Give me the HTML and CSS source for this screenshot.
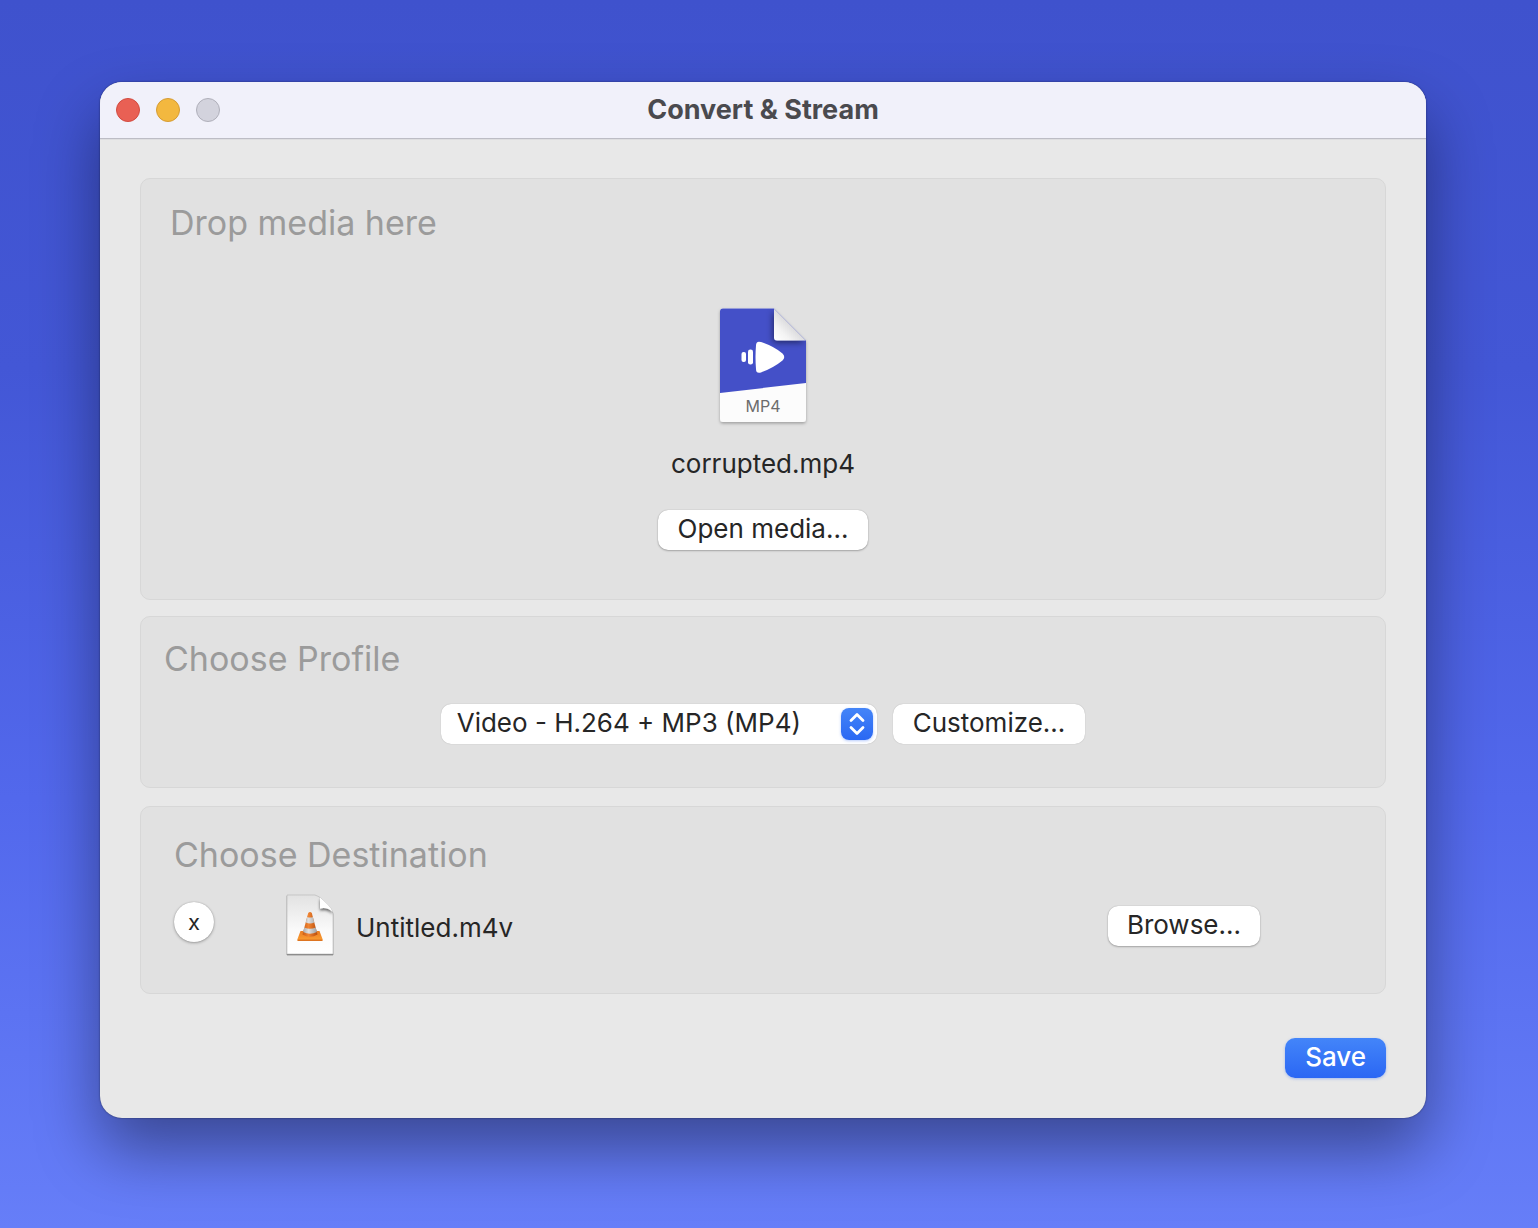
FILE: index.html
```html
<!DOCTYPE html>
<html lang="en">
<head>
<meta charset="utf-8">
<title>Convert &amp; Stream</title>
<link rel="stylesheet" href="styles.css">
</head>
<body>
<main class="window">
  <header class="titlebar">
    <div class="lights">
      <button class="light close" type="button" aria-label="Close"></button>
      <button class="light minimize" type="button" aria-label="Minimize"></button>
      <button class="light zoom" type="button" aria-label="Zoom" disabled></button>
    </div>
    <h1 class="title">Convert &amp; Stream</h1>
  </header>
  <form class="content">
    <section class="panel media">
      <h2 class="heading">Drop media here</h2>
      <div class="drop">
        <svg class="file-icon" width="102" height="126" viewBox="0 0 102 126" aria-hidden="true">
          <defs>
            <linearGradient id="fold" x1="0" y1="1" x2="1" y2="0">
              <stop offset="0" stop-color="#fff"/>
              <stop offset=".25" stop-color="#f4f4f4"/>
              <stop offset=".5" stop-color="#dcdcde"/>
            </linearGradient>
            <filter id="soft" x="-20%" y="-20%" width="140%" height="140%">
              <feDropShadow dx="0" dy="1.5" stdDeviation="1.5" flood-opacity=".3"/>
            </filter>
            <filter id="foldshade" x="-40%" y="-40%" width="180%" height="180%">
              <feDropShadow dx="-1" dy="2" stdDeviation="3" flood-opacity=".5"/>
            </filter>
            <clipPath id="page"><path d="M11 4.500H62L94 36.500V115a3 3 0 0 1-3 3H11a3 3 0 0 1-3-3V7.500a3 3 0 0 1 3-3z"/></clipPath>
          </defs>
          <path filter="url(#soft)" fill="#fcfcfc" d="M11 4.500H62L94 36.500V115a3 3 0 0 1-3 3H11a3 3 0 0 1-3-3V7.500a3 3 0 0 1 3-3z"/>
          <g clip-path="url(#page)">
            <path fill="#4450c8" d="M8 4H94V79L8 89z"/>
            <path filter="url(#foldshade)" fill="url(#fold)" d="M62 4.500L94 36.500H65a3 3 0 0 1-3-3z"/>
          </g>
          <rect x="29.500" y="48" width="4.500" height="10" rx="2" fill="#fff"/>
          <rect x="36" y="45.500" width="5" height="15" rx="2.300" fill="#fff"/>
          <path fill="#fff" d="M44 41.500q0-5 5-3.500q13 4.500 21.500 11.500q3.500 3.500 0 7q-8.500 7-21.500 12q-5 1.500-5-3.500q-1-12 0-23.500z"/>
          <text class="file-type" x="51" y="107.500" text-anchor="middle">MP4</text>
        </svg>
        <p class="filename">corrupted.mp4</p>
        <button class="button" type="button">Open media...</button>
      </div>
    </section>
    <section class="panel profile">
      <h2 class="heading"><label for="profile">Choose Profile</label></h2>
      <div class="profile-row">
        <div class="picker">
          <select id="profile" class="select">
            <option>Video - H.264 + MP3 (MP4)</option>
          </select>
          <svg class="stepper" width="32" height="32" viewBox="0 0 32 32" aria-hidden="true">
            <path d="M10 12.500L16 6.500L22 12.500M10 19.500L16 25.500L22 19.500" fill="none" stroke="#fff" stroke-width="2.800" stroke-linecap="round" stroke-linejoin="round"/>
          </svg>
        </div>
        <button class="button customize" type="button">Customize...</button>
      </div>
    </section>
    <section class="panel destination">
      <h2 class="heading">Choose Destination</h2>
      <div class="destination-row">
        <button class="clear" type="button" aria-label="Remove destination">x</button>
        <svg class="doc-icon" width="50" height="64" viewBox="0 0 50 64" aria-hidden="true">
          <defs>
            <linearGradient id="paper" x1="0" y1="0" x2="0" y2="1">
              <stop offset="0" stop-color="#e2e2e2"/>
              <stop offset=".6" stop-color="#fafafa"/>
              <stop offset="1" stop-color="#fff"/>
            </linearGradient>
            <linearGradient id="orange" x1="0" y1="0" x2="1" y2="0">
              <stop offset="0" stop-color="#c95c14"/>
              <stop offset=".4" stop-color="#f08432"/>
              <stop offset="1" stop-color="#b84d0c"/>
            </linearGradient>
            <linearGradient id="stripe" x1="0" y1="0" x2="1" y2="0">
              <stop offset="0" stop-color="#aaa"/>
              <stop offset=".4" stop-color="#e0e0e0"/>
              <stop offset="1" stop-color="#a0a0a0"/>
            </linearGradient>
            <linearGradient id="base" x1="0" y1="0" x2="0" y2="1">
              <stop offset="0" stop-color="#ea7c22"/>
              <stop offset="1" stop-color="#fba033"/>
            </linearGradient>
            <filter id="docshade" x="-20%" y="-20%" width="140%" height="140%">
              <feDropShadow dx="0" dy="1" stdDeviation=".7" flood-opacity=".6"/>
            </filter>
            <filter id="curlshade" x="-50%" y="-50%" width="200%" height="200%">
              <feDropShadow dx="0" dy="2" stdDeviation="1.600" flood-opacity=".6"/>
            </filter>
            <clipPath id="docclip"><path d="M2 2H30Q34 3 38 7L43 12Q47 16 48 20V61H2z"/></clipPath>
          </defs>
          <path filter="url(#docshade)" fill="url(#paper)" stroke="#aaa" stroke-width=".5" d="M2 2H30Q34 3 38 7L43 12Q47 16 48 20V61H2z"/>
          <g clip-path="url(#docclip)">
            <path filter="url(#curlshade)" fill="#fff" d="M35 4V15.500Q42 13.500 48 19L46 14z"/>
          </g>
          <path fill="url(#base)" d="M15.500 38H34.500L37.500 46Q38 48 36.500 48H13.500Q12 48 12.500 46z"/>
          <path fill="#dd7420" d="M12.500 46.500H37.500Q38 48 36.500 48H13.500Q12 48 12.500 46.500z"/>
          <path fill="url(#orange)" d="M23.200 20Q25 18 26.800 20L32.500 41.500Q25 46 17.500 41.500z"/>
          <path fill="url(#stripe)" d="M22.100 24Q25 25 27.900 24L29.300 29.500Q25 31.500 20.700 29.500zM19.300 34.500Q25 37 30.700 34.500L31.900 39Q25 42.500 18.100 39z"/>
        </svg>
        <p class="filename">Untitled.m4v</p>
        <button class="button browse" type="button">Browse...</button>
      </div>
    </section>
    <div class="actions">
      <button class="button primary" type="submit">Save</button>
    </div>
  </form>
</main>
</body>
</html>
```
FILE: styles.css
```css
* {
  box-sizing: border-box;
}

body {
  margin: 0;
  min-height: 100vh;
  padding: 82px 112px 110px 100px;
  background: linear-gradient(#3f52cd, #4357d6 30%, #5268ec 65%, #667ef8);
  color: #262626;
  font-family: Inter, "Liberation Sans", sans-serif;
  font-size: 26px;
  line-height: 32px;
}

h1,
h2,
p {
  margin: 0;
}

button,
select {
  font: inherit;
  color: inherit;
  border: 0;
}

.window {
  border-radius: 22px;
  background: #e8e8e8;
  box-shadow: 0 0 2px rgba(0, 0, 0, .5), 0 32px 64px rgba(0, 0, 0, .4);
}

.titlebar {
  display: grid;
  grid-template-columns: 1fr auto 1fr;
  align-items: center;
  height: 56px;
  padding: 0 16px;
  border-radius: 22px 22px 0 0;
  background: #f1f1fa;
  box-shadow: 0 1px 0 #bdbdc5, 0 2px 0 #dedee0;
}

.lights {
  display: flex;
  gap: 16px;
}

.light {
  width: 24px;
  height: 24px;
  padding: 0;
  border: 1px solid;
  border-radius: 50%;
}

.close {
  background: #e96054;
  border-color: #d24b40;
}

.minimize {
  background: #f3b83f;
  border-color: #d69c34;
}

.zoom {
  background: #d3d3dd;
  border-color: #b0b0ba;
}

.title {
  color: #4a4a4e;
  font-size: 27px;
  line-height: 32px;
  font-weight: 700;
}

.content {
  padding: 40px;
}

.panel {
  border: 1px solid #d7d7d7;
  border-radius: 10px;
  background: #e1e1e1;
}

.heading {
  color: #9b9b9b;
  font-size: 34px;
  line-height: 44px;
  font-weight: 400;
}

.media {
  min-height: 422px;
  padding: 22px 29px;
}

.drop {
  display: flex;
  flex-direction: column;
  align-items: center;
  padding-top: 59px;
}

.drop .filename {
  margin: 18px 0 30px;
}

.file-icon {
  display: block;
}

.file-type {
  font-size: 16px;
  fill: #6c6c6c;
}

.button {
  height: 40px;
  padding: 0 20px 2px;
  border-radius: 10px;
  background: #fff;
  box-shadow: 0 0 1px rgba(0, 0, 0, .3), 0 1px 2px rgba(0, 0, 0, .25);
}

.profile {
  min-height: 172px;
  margin-top: 16px;
  padding: 20px 23px;
}

.profile-row {
  display: flex;
  justify-content: center;
  gap: 16px;
  padding-top: 23px;
}

.picker {
  position: relative;
  width: 436px;
}

.select {
  appearance: none;
  width: 100%;
  height: 40px;
  padding: 0 48px 2px 16px;
  border-radius: 10px;
  background: #fff;
  box-shadow: 0 0 1px rgba(0, 0, 0, .3);
}

.stepper {
  position: absolute;
  top: 4px;
  right: 4px;
  border-radius: 8px;
  background: linear-gradient(#4485f8, #2a68f3);
  box-shadow: 0 1px 3px rgba(42, 104, 243, .35);
  pointer-events: none;
}

.customize {
  box-shadow: 0 0 1px rgba(0, 0, 0, .3);
}

.destination {
  min-height: 188px;
  margin-top: 18px;
  padding: 26px 125px 26px 33px;
}

.destination-row {
  display: flex;
  align-items: center;
  padding-top: 16px;
}

.clear {
  width: 40px;
  height: 40px;
  margin: 0 71px 6px 0;
  padding: 0;
  border-radius: 50%;
  background: #fff;
  box-shadow: 0 0 1px rgba(0, 0, 0, .3), 0 1px 3px rgba(0, 0, 0, .3);
  font-size: 22px;
}

.doc-icon {
  margin-right: 21px;
}

.destination .filename {
  padding-top: 6px;
}

.browse {
  margin: 2px 0 0 auto;
  padding: 0 19px 2px;
}

.actions {
  display: flex;
  justify-content: flex-end;
  padding-top: 44px;
}

.primary {
  background: linear-gradient(#4385f9, #2b67f4);
  box-shadow: 0 1px 3px rgba(42, 104, 243, .35);
  color: #fff;
  font-weight: 500;
}
```
